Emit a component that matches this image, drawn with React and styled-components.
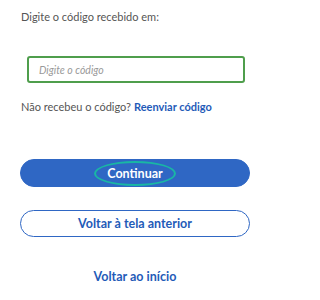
import React from "react";
import styled, { createGlobalStyle } from "styled-components";

const Global = createGlobalStyle`
  html, body { margin: 0; padding: 0; background: #fff; }
  body { font-family: Lato, "Open Sans", sans-serif; }
`;

const Page = styled.div`
  width: 275px;
  height: 300px;
  box-sizing: border-box;
  padding: 10px 20px 0 21px;
  display: flex;
  flex-direction: column;
`;

const Label = styled.p`
  margin: 0;
  font-size: 11px;
  line-height: 14px;
  color: #555;
`;

const Input = styled.input`
  margin: 32px 10px 0 6px;
  height: 27px;
  box-sizing: border-box;
  border: 2px solid #4f9e4c;
  border-radius: 3px;
  padding: 0 10px;
  font-family: inherit;
  font-size: 10.5px;
  outline: none;
  &::placeholder { color: #999; font-style: italic; }
`;

const Row = styled.p`
  margin: 17px 0 0;
  font-size: 11px;
  line-height: 14px;
  color: #555;
`;

const Link = styled.a`
  margin-left: 3px;
  color: #1f5bb8;
  font-weight: 700;
  text-decoration: none;
`;

const Button = styled.button`
  box-sizing: border-box;
  height: ${p => p.$h}px;
  margin-top: ${p => p.$mt}px;
  width: 230px;
  margin-left: -1px;
  border-radius: 14px;
  border: 1px solid #2f67c4;
  background: ${p => (p.$primary ? "#2f67c4" : "#fff")};
  color: ${p => (p.$primary ? "#fff" : "#1f5bb8")};
  font-family: inherit;
  font-weight: 700;
  font-size: 12.5px;
  display: flex;
  align-items: center;
  justify-content: center;
  padding: 0;
`;

const Focus = styled.span`
  padding: 3px 11px;
  border: 2px solid #19b7a4;
  border-radius: 50%;
`;

const TextLink = styled.a`
  margin-top: 32px;
  align-self: center;
  margin-left: -6px;
  color: #1f5bb8;
  font-weight: 700;
  font-size: 12.5px;
  text-decoration: none;
`;

export default function App() {
  return (
    <>
      <Global />
      <Page>
        <Label>Digite o código recebido em:</Label>
        <Input placeholder="Digite o código" />
        <Row>
          Não recebeu o código?<Link href="#">Reenviar código</Link>
        </Row>
        <Button $primary $h={28} $mt={45}>
          <Focus>Continuar</Focus>
        </Button>
        <Button $h={27} $mt={23}>Voltar à tela anterior</Button>
        <TextLink href="#">Voltar ao início</TextLink>
      </Page>
    </>
  );
}
